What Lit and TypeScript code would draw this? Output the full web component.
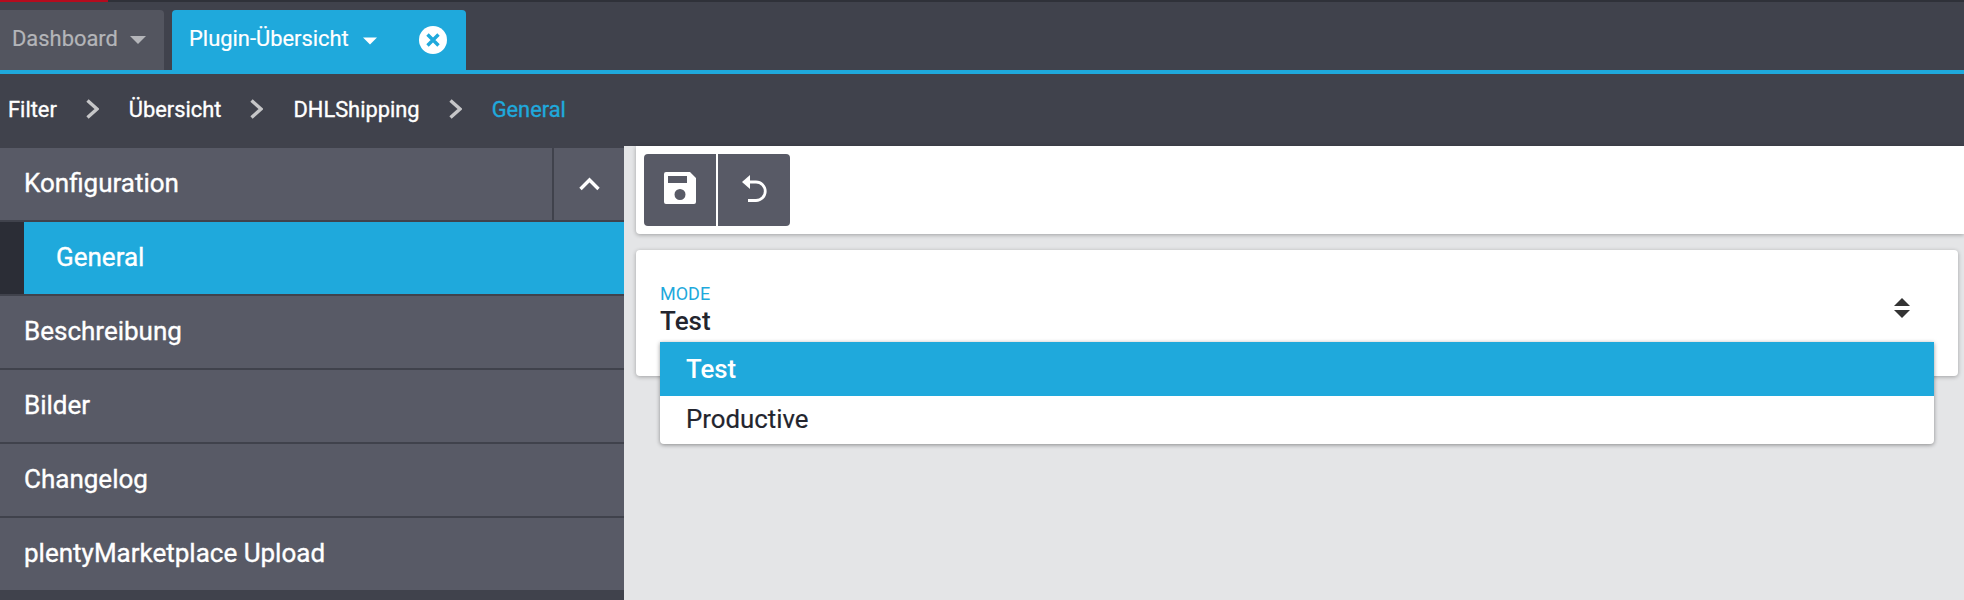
import { LitElement, css, html } from 'lit';
import { customElement } from 'lit/decorators.js';

const crumbs = ['Filter', 'Übersicht', 'DHLShipping'];
const rows = ['Beschreibung', 'Bilder', 'Changelog', 'plentyMarketplace Upload'];

@customElement('app-root')
export class AppRoot extends LitElement {
    static styles = css`
        :host{
            display: block;
            height: 600px;
            overflow: hidden;
            background: #40424c;
            font-family: Roboto, "Liberation Sans", sans-serif;
        }

        /* TABS */

        .progress{
            height: 2px;
            background: #2f3139;
        }
        .progress div{
            width: 108px;
            height: 2px;
            background: #b40b1e;
        }

        .tabs{
            display: flex;
            gap: 8px;
            height: 60px;
            margin-top: 8px;
            border-bottom: 4px solid #1fa9dc;
        }

        .tab{
            display: flex;
            align-items: center;
            height: 60px;
            border-radius: 0 4px 0 0;
            font-size: 21.9px;
            font-weight: 400;
            -webkit-text-stroke: 0.2px currentColor;
            padding-bottom: 4px;
            box-sizing: border-box;
        }
        .tab.dashboard{
            width: 164px;
            padding-left: 12px;
            background: #53555f;
            color: #b4b5b9;
        }
        .tab.active{
            width: 294px;
            padding-left: 17px;
            background: #1fa9dc;
            color: #fff;
            border-radius: 4px 4px 0 0;
        }
        .caret{
            margin-left: 12px;
            margin-top: 4px;
            display: block;
        }
        .tab.active .caret{
            margin-left: 14px;
            margin-top: 6px;
        }
        .close{
            margin-left: 42px;
            margin-top: 4px;
            display: block;
        }

        /* BREADCRUMB */

        .crumbs{
            display: flex;
            align-items: center;
            height: 72px;
            padding-left: 8px;
            padding-bottom: 2px;
            box-sizing: border-box;
            font-size: 21.85px;
            -webkit-text-stroke: 0.35px currentColor;
            color: #fff;
        }
        .crumbs svg{
            display: block;
            margin: 0 30px 0 29px;
        }
        .crumbs .current{
            color: #1fa9dc;
        }

        /* BODY */

        .body{
            display: flex;
            height: 454px;
        }

        .sidebar{
            flex: 0 0 624px;
            display: flex;
            flex-direction: column;
            gap: 2px;
            padding-top: 2px;
            box-sizing: border-box;
        }

        .row{
            display: flex;
            align-items: center;
            flex: 0 0 72px;
            padding-left: 24px;
            padding-bottom: 3px;
            box-sizing: border-box;
            background: #585a66;
            color: #fff;
            font-size: 26px;
            -webkit-text-stroke: 0.35px currentColor;
        }
        .row.head{
            padding-bottom: 0;
        }
        .row.head span{
            padding-bottom: 3px;
        }
        .toggle{
            display: flex;
            align-items: center;
            justify-content: center;
            align-self: stretch;
            width: 70px;
            margin-left: auto;
            border-left: 2px solid #40424c;
        }
        .sub{
            flex: 0 0 72px;
            background: #2b2d36;
            padding-left: 24px;
        }
        .sub div{
            display: flex;
            align-items: center;
            height: 100%;
            padding-left: 32px;
            padding-bottom: 3px;
            box-sizing: border-box;
            background: #1fa9dc;
            color: #fff;
            font-size: 26px;
            -webkit-text-stroke: 0.35px currentColor;
        }

        .content{
            flex: 1;
            display: flex;
            flex-direction: column;
            gap: 16px;
            background: #e4e5e7;
            padding-left: 12px;
            padding-right: 6px;
        }

        .toolbar{
            display: flex;
            height: 88px;
            margin-right: -6px;
            padding: 8px;
            box-sizing: border-box;
            background: #fff;
            border-radius: 0 0 0 4px;
            box-shadow: 0 1px 4px rgb(0 0 0 / 0.3);
        }
        .btn{
            display: flex;
            align-items: center;
            justify-content: center;
            width: 72px;
            height: 72px;
            background: #585a66;
        }
        .btn.first{
            border-radius: 4px 0 0 4px;
            margin-right: 2px;
            padding-bottom: 4px;
            box-sizing: border-box;
        }
        .btn.last{
            border-radius: 0 4px 4px 0;
            padding-bottom: 2px;
            box-sizing: border-box;
        }

        .card{
            position: relative;
            height: 126px;
            padding: 35px 24px 0;
            box-sizing: border-box;
            background: #fff;
            border-radius: 4px;
            box-shadow: 0 1px 4px rgb(0 0 0 / 0.3);
        }
        .label{
            font-size: 18px;
            line-height: 18px;
            color: #1fa9dc;
        }
        .value{
            margin-top: 3px;
            font-size: 26px;
            line-height: 30px;
            font-weight: 500;
            color: #23252e;
        }
        .sort{
            position: absolute;
            top: 48px;
            right: 48px;
            display: block;
        }

        .menu{
            position: absolute;
            top: 92px;
            left: 24px;
            right: 24px;
            background: #fff;
            border-radius: 0 0 4px 4px;
            box-shadow: 0 1px 4px rgb(0 0 0 / 0.4);
            font-size: 25.8px;
            -webkit-text-stroke: 0.2px currentColor;
            color: #23252e;
        }
        .option{
            display: flex;
            align-items: center;
            height: 48px;
            padding-left: 26px;
            padding-bottom: 2px;
            box-sizing: border-box;
        }
        .option.selected{
            height: 54px;
            padding-bottom: 1px;
            background: #1fa9dc;
            color: #fff;
            font-weight: 500;
            -webkit-text-stroke: 0;
        }
    `;

    private _caret(color: string, width: number, height: number) {
        return html`
            <svg class="caret" width="${width}" height="${height}" viewBox="0 0 16 8">
                <path d="M0 0H16L8 8Z" fill="${color}"></path>
            </svg>
        `;
    }

    private _chevron() {
        return html`
            <svg width="13" height="20" viewBox="0 0 13 20">
                <path d="M1.500 1.500L11 10L1.500 18.500" fill="none" stroke="#c6c6c8" stroke-width="3.400"></path>
            </svg>
        `;
    }

    render() {
        return html`
            <div class="progress"><div></div></div>

            <div class="tabs">
                <div class="tab dashboard">
                    Dashboard
                    ${this._caret('#b4b5b9', 16, 8)}
                </div>
                <div class="tab active">
                    Plugin-Übersicht
                    ${this._caret('#fff', 14, 8)}
                    <svg class="close" width="28" height="28" viewBox="0 0 28 28">
                        <circle cx="14" cy="14" r="14" fill="#fff"></circle>
                        <path d="M8.500 8.500L19.500 19.500M19.500 8.500L8.500 19.500" stroke="#1fa9dc" stroke-width="3.400"></path>
                    </svg>
                </div>
            </div>

            <nav class="crumbs">
                ${crumbs.map(c => html`<span>${c}</span>${this._chevron()}`)}
                <span class="current">General</span>
            </nav>

            <div class="body">
                <aside class="sidebar">
                    <div class="row head">
                        <span>Konfiguration</span>
                        <div class="toggle">
                            <svg width="21" height="14" viewBox="0 0 21 14">
                                <path d="M1.500 12L10.500 3L19.500 12" fill="none" stroke="#fff" stroke-width="3.400"></path>
                            </svg>
                        </div>
                    </div>
                    <div class="sub"><div>General</div></div>
                    ${rows.map(r => html`<div class="row">${r}</div>`)}
                </aside>

                <main class="content">
                    <div class="toolbar">
                        <div class="btn first">
                            <svg width="32" height="32" viewBox="0 0 32 32">
                                <path fill="#fff" fill-rule="evenodd" d="M2 0H26L32 6V30A2 2 0 0 1 30 32H2A2 2 0 0 1 0 30V2A2 2 0 0 1 2 0ZM4 4V11H23V4ZM16 17A5.500 5.500 0 1 0 16 28A5.500 5.500 0 1 0 16 17Z"></path>
                            </svg>
                        </div>
                        <div class="btn last">
                            <svg width="26" height="28" viewBox="0 0 26 28">
                                <path d="M8 7H15A9.250 9.250 0 0 1 15 25.500H7" fill="none" stroke="#fff" stroke-width="2.800"></path>
                                <path d="M9 0V14L1 7Z" fill="#fff"></path>
                            </svg>
                        </div>
                    </div>

                    <div class="card">
                        <div class="label">MODE</div>
                        <div class="value">Test</div>
                        <svg class="sort" width="16" height="20" viewBox="0 0 16 20">
                            <path d="M8 0L16 8H0ZM0 12H16L8 20Z" fill="#333"></path>
                        </svg>
                        <div class="menu">
                            <div class="option selected">Test</div>
                            <div class="option">Productive</div>
                        </div>
                    </div>
                </main>
            </div>
        `;
    }
}
